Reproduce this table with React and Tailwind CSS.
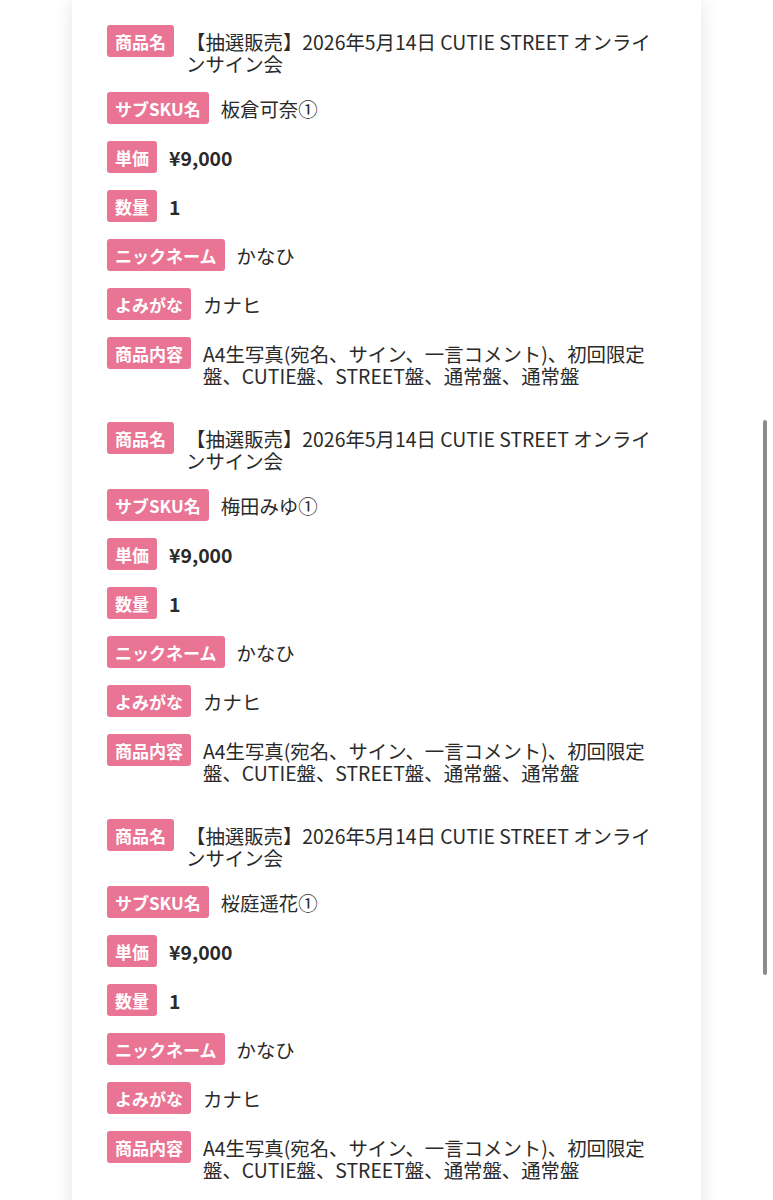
import React from "react";

const items = [
  { sub: "板倉可奈①" },
  { sub: "梅田みゆ①" },
  { sub: "桜庭遥花①" },
];

function Label({ children }) {
  return (
    <span className="shrink-0 h-[32px] px-[8px] flex items-center rounded-[3px] bg-[#e97494] text-white text-[17px] font-semibold leading-none whitespace-nowrap">
      {children}
    </span>
  );
}

function Row({ label, children, bold }) {
  return (
    <div className="flex items-start gap-[12px]">
      <Label>{label}</Label>
      <div className={`pt-[6px] text-[19.4px] leading-[22px] text-[#2a2a2a] ${bold ? "font-bold" : ""}`}>
        {children}
      </div>
    </div>
  );
}

function OrderItem({ sub }) {
  return (
    <div className="flex flex-col gap-[17px]">
      <Row label="商品名">【抽選販売】2026年5月14日 CUTIE STREET オンラインサイン会</Row>
      <Row label="サブSKU名">{sub}</Row>
      <Row label="単価" bold>¥9,000</Row>
      <Row label="数量" bold>1</Row>
      <Row label="ニックネーム">かなひ</Row>
      <Row label="よみがな">カナヒ</Row>
      <Row label="商品内容">A4生写真(宛名、サイン、一言コメント)、初回限定盤、CUTIE盤、STREET盤、通常盤、通常盤</Row>
    </div>
  );
}

export default function App() {
  return (
    <div
      className="relative h-[1200px] overflow-hidden bg-white"
      style={{ fontFamily: '"Noto Sans CJK JP", "Noto Sans", sans-serif' }}
    >
      <div className="ml-[72px] w-[629px] min-h-[1200px] bg-white shadow-[0_0_18px_rgba(0,0,0,0.11)] pl-[35px] pr-[35px] pt-[25px] pb-[40px]">
        <div className="flex flex-col gap-[35px]">
          {items.map((it) => (
            <OrderItem key={it.sub} sub={it.sub} />
          ))}
        </div>
      </div>
      {/* overlay scrollbar */}
      <div className="absolute right-[6px] top-[420px] w-[4px] h-[555px] rounded-full bg-[#8c8c8c]" />
    </div>
  );
}
